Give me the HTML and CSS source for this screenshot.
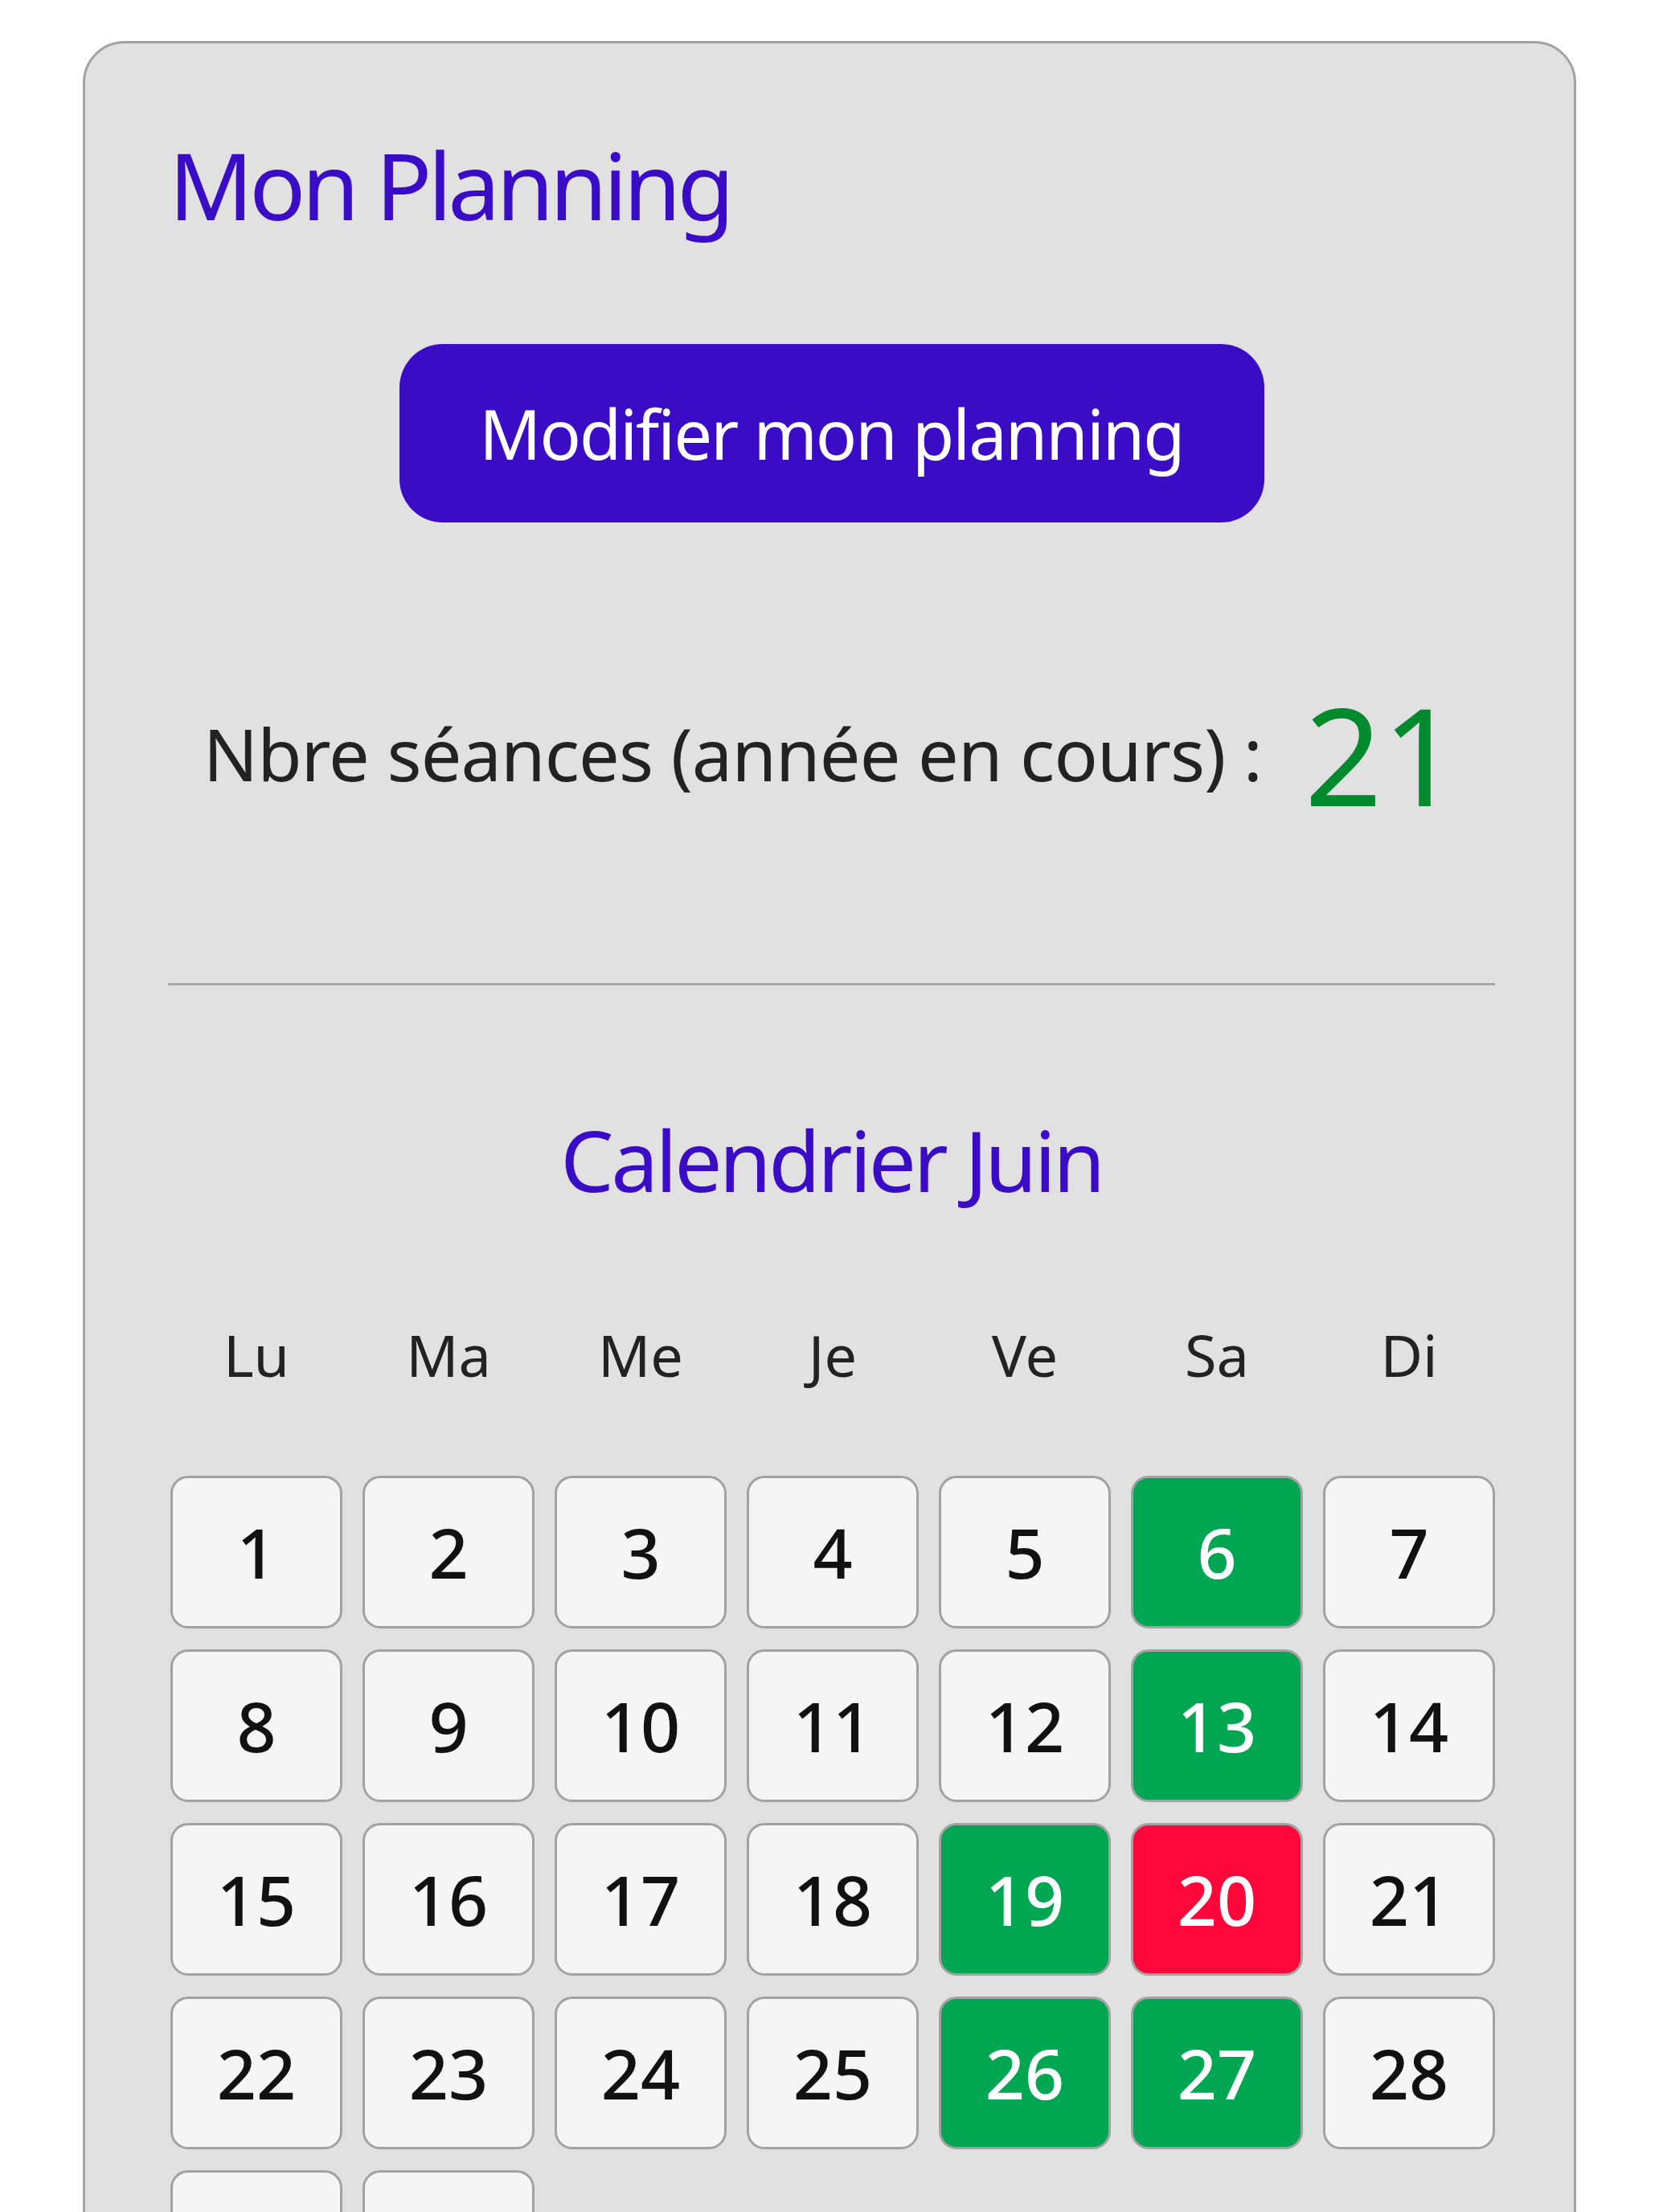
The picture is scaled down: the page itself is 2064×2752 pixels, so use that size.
FILE: index.html
```html
<!DOCTYPE html>
<html lang="fr">
<head>
<meta charset="utf-8">
<title>Mon Planning</title>
<link rel="stylesheet" href="styles.css">
</head>
<body>
<div class="card">
  <h1 class="title">Mon Planning</h1>
  <div class="btn-row"><a class="btn" href="#">Modifier mon planning</a></div>
  <div class="count">
    <span class="count-label">Nbre séances (année en cours) :</span>
    <span class="count-value">21</span>
  </div>
  <hr class="sep">
  <h2 class="cal-title">Calendrier Juin</h2>
  <div class="weekdays">
    <span>Lu</span><span>Ma</span><span>Me</span><span>Je</span><span>Ve</span><span>Sa</span><span>Di</span>
  </div>
  <div class="days">
    <div class="day">1</div><div class="day">2</div><div class="day">3</div><div class="day">4</div><div class="day">5</div><div class="day on">6</div><div class="day">7</div>
    <div class="day">8</div><div class="day">9</div><div class="day">10</div><div class="day">11</div><div class="day">12</div><div class="day on">13</div><div class="day">14</div>
    <div class="day">15</div><div class="day">16</div><div class="day">17</div><div class="day">18</div><div class="day on">19</div><div class="day off">20</div><div class="day">21</div>
    <div class="day">22</div><div class="day">23</div><div class="day">24</div><div class="day">25</div><div class="day on">26</div><div class="day on">27</div><div class="day">28</div>
    <div class="day">29</div><div class="day">30</div>
  </div>
</div>
</body>
</html>
```
FILE: styles.css
```css
html, body {
  margin: 0;
  padding: 0;
  background: #ffffff;
}
body {
  font-family: "Noto Sans", "Open Sans", sans-serif;
  padding-top: 51px;
}
.card {
  width: 1858px;
  box-sizing: border-box;
  margin: 0 auto;
  background: #e1e1e1;
  border: 3px solid #a2a2a2;
  border-radius: 52px;
  padding: 105px 98px 200px 103px;
}
.title {
  margin: 0;
  font-size: 116px;
  line-height: 140px;
  font-weight: 400;
  color: #3a0cc6;
  letter-spacing: -5px;
  padding-left: 1px;
}
.btn-row {
  display: flex;
  justify-content: center;
  margin-top: 129px;
}
.btn {
  display: flex;
  align-items: center;
  justify-content: center;
  width: 1076px;
  height: 222px;
  border-radius: 54px;
  background: #3a0cc6;
  color: #ffffff;
  text-decoration: none;
  font-size: 85px;
  line-height: 1;
  letter-spacing: -2px;
}
.count {
  display: flex;
  align-items: center;
  justify-content: center;
  gap: 53px;
  margin-top: 201px;
  height: 172px;
}
.count-label {
  font-size: 90px;
  line-height: 1;
  color: #222222;
  letter-spacing: -0.9px;
}
.count-value {
  font-size: 169px;
  line-height: 1;
  color: #008a2e;
}
.sep {
  margin: 200px 0 0 0;
  border: 0;
  height: 3px;
  background: #a8a8a8;
}
.cal-title {
  margin: 152px 0 0 0;
  text-align: center;
  font-size: 105px;
  line-height: 130px;
  font-weight: 400;
  color: #3a0cc6;
  letter-spacing: -3.5px;
}
.weekdays {
  display: grid;
  grid-template-columns: repeat(7, 1fr);
  column-gap: 25px;
  margin: 132px 0 0 3px;
  font-size: 72px;
  line-height: 90px;
  color: #222222;
  text-align: center;
}
.days {
  display: grid;
  grid-template-columns: repeat(7, 1fr);
  grid-auto-rows: 190px;
  column-gap: 25px;
  row-gap: 26px;
  margin: 106px 0 0 3px;
}
.day {
  display: flex;
  align-items: center;
  justify-content: center;
  box-sizing: border-box;
  background: #f5f5f5;
  border: 3px solid #a2a2a2;
  border-radius: 22px;
  font-size: 86px;
  font-weight: 500;
  line-height: 1;
  color: #111111;
}
.day.on {
  background: #00a651;
  color: #ffffff;
}
.day.off {
  background: #ff073a;
  color: #ffffff;
}
```
